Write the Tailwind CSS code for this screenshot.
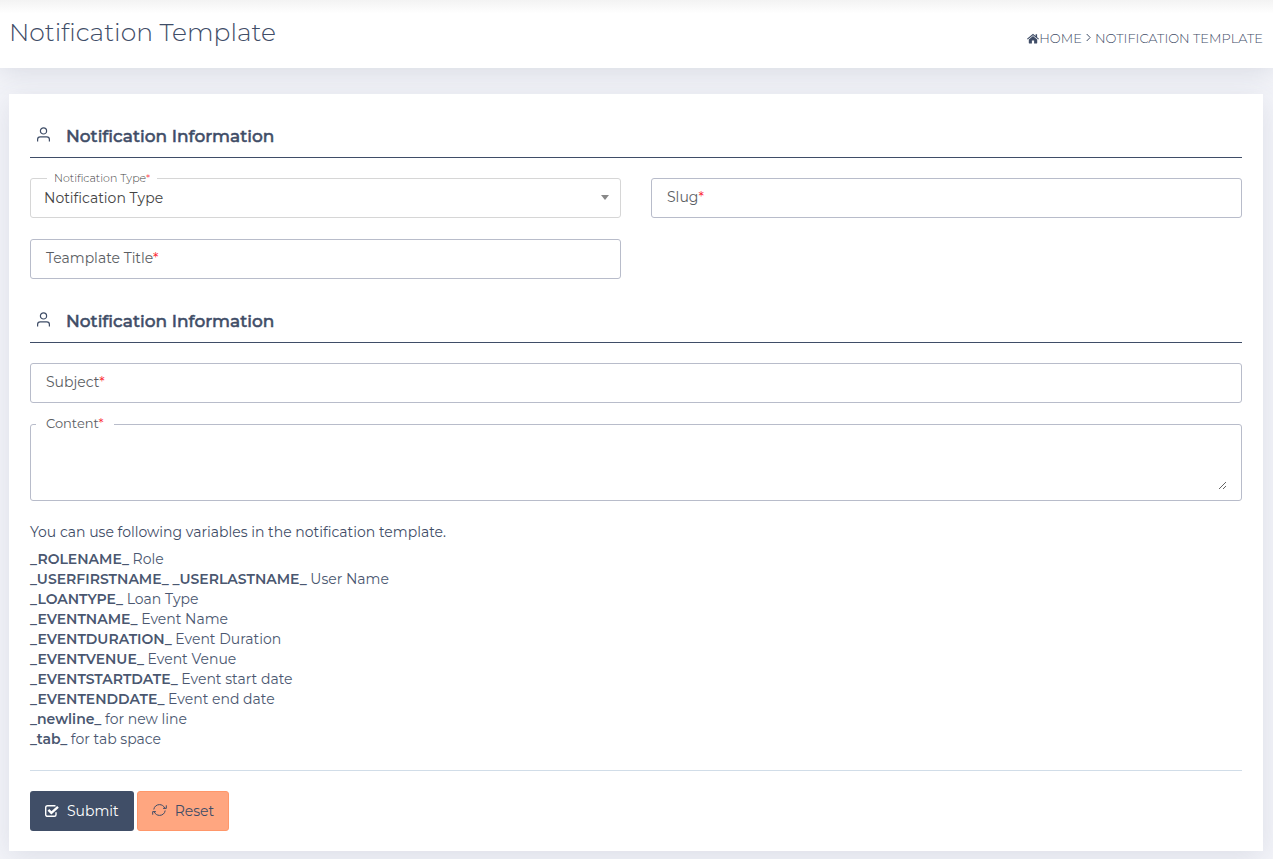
<!DOCTYPE html>
<html lang="en">
<head>
<meta charset="utf-8">
<meta name="viewport" content="width=device-width, initial-scale=1">
<title>Notification Template</title>
<script src="https://cdn.jsdelivr.net/npm/@tailwindcss/browser@4"></script>
</head>
<body class="min-h-screen bg-[#f3f4f9] font-[Montserrat,Inter,sans-serif] text-[14px] leading-5 font-normal text-[#3f4d67]">
<header class="flex h-[68px] items-center justify-between bg-linear-to-b from-[#f3f3f3] to-white to-20% pr-[10px] pl-[9px] shadow-[0_2px_28px_0_rgba(63,77,103,0.17)]">
  <h1 class="pb-1 text-[25px] leading-8 font-light">Notification Template</h1>
  <nav aria-label="Breadcrumb" class="pt-2">
    <ol class="flex items-center text-[13px] leading-5 font-light">
      <li>
        <a href="#" class="flex items-center">
          <svg class="h-[11px] w-3" viewBox="0 0 12 11" fill="currentColor" aria-hidden="true"><path d="M6 .8 0 5.800l.7.800L6 2.200l5.300 4.400.7-.8-1.900-1.600V1.200H8.600V3z"/><path d="M6 3.100 1.800 6.600V10c0 .3.200.5.5.5h2.600V7.600h2.200v2.900h2.600c.3 0 .5-.2.5-.5V6.600z"/></svg>HOME
        </a>
      </li>
      <li class="flex items-center">
        <svg class="mx-1 mb-0.5 h-[9px] w-[5px]" viewBox="0 0 5 9" fill="none" stroke="currentColor" stroke-width="1" aria-hidden="true"><path d="m.7 1 3.400 3.500L.7 8"/></svg>
        <a href="#">NOTIFICATION TEMPLATE</a>
      </li>
    </ol>
  </nav>
</header>

<main class="pt-[26px] pr-[10px] pb-2 pl-[9px]">
  <form class="bg-white px-[21px] pt-[21px] pb-5 shadow-[0_6px_28px_0_rgba(63,77,103,0.12)]">
    <h2 class="flex h-[43px] items-center border-b border-[#3f4d67] pl-[7px] text-[17px] leading-5 font-medium">
      <svg class="mr-4 mb-1 h-[15px] w-[13px]" viewBox="0 0 13 15" fill="none" stroke="currentColor" stroke-width="1.2" aria-hidden="true"><circle cx="6.5" cy="3.9" r="3.1"/><path d="M.6 14.600v-2.200c0-1.500 1.100-2.500 2.600-2.500h6.600c1.500 0 2.600 1 2.600 2.500v2.200"/></svg>
      <span class="[-webkit-text-stroke:0.5px_currentColor]">Notification Information</span>
    </h2>

    <div class="mt-5 grid grid-cols-2 gap-x-[30px] gap-y-[21px]">
      <div class="relative h-10">
        <select id="type" class="size-full appearance-none rounded-[3px] border border-[#d6d6d6] bg-white px-[13px] text-[14px] text-[#444]">
          <option>Notification Type</option>
        </select>
        <label for="type" class="absolute -top-2 left-[17px] bg-white px-[7px] text-[11px] leading-4 font-light text-[#444]">Notification Type<span class="text-red-500">*</span></label>
        <svg class="pointer-events-none absolute top-[17px] right-3 h-[5px] w-2" viewBox="0 0 8 5" fill="#888" aria-hidden="true"><path d="M0 0h8L4 5z"/></svg>
      </div>
      <div class="relative h-10">
        <input id="slug" type="text" class="size-full rounded-[3px] border border-[#b8bcca] px-4">
        <label for="slug" class="absolute top-[9px] left-4 text-[#5b5e63]">Slug<span class="text-red-500">*</span></label>
      </div>
      <div class="relative h-10">
        <input id="title" type="text" class="size-full rounded-[3px] border border-[#b8bcca] px-4">
        <label for="title" class="absolute top-[9px] left-4 text-[#5b5e63]">Teamplate Title<span class="text-red-500">*</span></label>
      </div>
    </div>

    <h2 class="mt-[21px] flex h-[43px] items-center border-b border-[#3f4d67] pl-[7px] text-[17px] leading-5 font-medium">
      <svg class="mr-4 mb-1 h-[15px] w-[13px]" viewBox="0 0 13 15" fill="none" stroke="currentColor" stroke-width="1.2" aria-hidden="true"><circle cx="6.5" cy="3.9" r="3.1"/><path d="M.6 14.600v-2.200c0-1.500 1.100-2.500 2.600-2.500h6.600c1.500 0 2.600 1 2.600 2.500v2.200"/></svg>
      <span class="[-webkit-text-stroke:0.5px_currentColor]">Notification Information</span>
    </h2>

    <div class="relative mt-5 h-10">
      <input id="subject" type="text" class="size-full rounded-[3px] border border-[#b8bcca] px-4">
      <label for="subject" class="absolute top-[9px] left-4 text-[#5b5e63]">Subject<span class="text-red-500">*</span></label>
    </div>
    <div class="relative mt-[21px] rounded-[3px] border border-[#b8bcca] px-[14px] py-[10px]">
      <textarea id="content" class="block h-[55px] w-full resize-y outline-none"></textarea>
      <label for="content" class="absolute -top-3 left-[5px] bg-white px-[10px] text-[13px] leading-5 text-[#5b5e63]">Content<span class="text-red-500">*</span></label>
    </div>

    <p class="mt-[21px]">You can use following variables in the notification template.</p>
    <ul class="mt-[7px] text-[#4a5770]">
      <li><b class="font-semibold">_ROLENAME_</b> Role</li>
      <li><b class="font-semibold">_USERFIRSTNAME_ _USERLASTNAME_</b> User Name</li>
      <li><b class="font-semibold">_LOANTYPE_</b> Loan Type</li>
      <li><b class="font-semibold">_EVENTNAME_</b> Event Name</li>
      <li><b class="font-semibold">_EVENTDURATION_</b> Event Duration</li>
      <li><b class="font-semibold">_EVENTVENUE_</b> Event Venue</li>
      <li><b class="font-semibold">_EVENTSTARTDATE_</b> Event start date</li>
      <li><b class="font-semibold">_EVENTENDDATE_</b> Event end date</li>
      <li><b class="font-semibold">_newline_</b> for new line</li>
      <li><b class="font-semibold">_tab_</b> for tab space</li>
    </ul>

    <hr class="mt-[21px] border-[#d1dde8]">
    <div class="mt-5 flex gap-[3px]">
      <button type="submit" class="flex h-10 items-center gap-2 rounded-[3px] bg-[#404e67] px-[15px] text-white">
        <svg class="h-3 w-[14px]" viewBox="0 0 14 12" fill="none" stroke="currentColor" aria-hidden="true"><path stroke-width="1.4" d="M11 7.200v2.600c0 .9-.6 1.500-1.500 1.500h-7C1.600 11.300.7 10.700.7 9.800v-7C.7 1.600 1.600.8 2.500.8h7c.4 0 .7.1 1 .3"/><path stroke-width="2.4" d="m3.400 4.800 3 3L13 1.800"/></svg>
        Submit
      </button>
      <button type="reset" class="flex h-10 items-center gap-2 rounded-[3px] border border-[#ff976a] bg-[#ffa680] px-[14px]">
        <svg class="mb-0.5 h-3 w-[15px]" viewBox="0 0 15 12" fill="none" stroke="currentColor" stroke-width="1" aria-hidden="true"><path d="M1.800 5.500C2.100 2.700 4.500.6 7.400.6c2.400 0 4.400 1.300 5.300 3.400M13.200 6.500c-.3 2.800-2.700 4.900-5.600 4.900-2.400 0-4.400-1.300-5.300-3.400"/><path d="M14.300 1.300v3.100h-3.200M.7 10.700V7.600h3.200"/></svg>
        Reset
      </button>
    </div>
  </form>
</main>
</body>
</html>
